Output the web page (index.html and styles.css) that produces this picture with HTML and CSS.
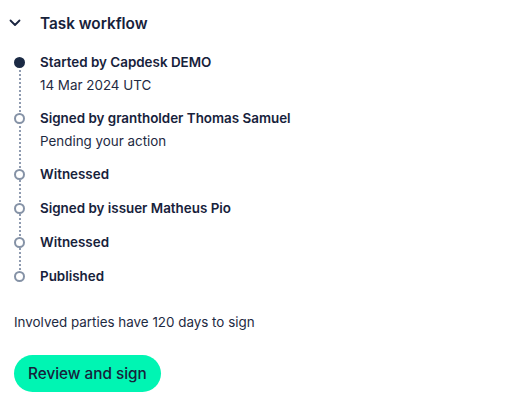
FILE: index.html
```html
<!DOCTYPE html>
<html>
<head>
<meta charset="utf-8">
<link rel="stylesheet" href="styles.css">
</head>
<body>
<div class="panel">
  <div class="header">
    <svg class="chev" width="12" height="8" viewBox="0 0 12 8"><path d="M1.5 1.5 L6 6 L10.5 1.5" fill="none" stroke="#1a2540" stroke-width="1.8" stroke-linecap="round" stroke-linejoin="round"/></svg>
    <span class="title">Task workflow</span>
  </div>
  <ul class="steps">
    <li class="step done">
      <div class="rail"><span class="dot"></span><span class="line"></span></div>
      <div class="body"><div class="label">Started by Capdesk DEMO</div><div class="sub">14 Mar 2024 UTC</div></div>
    </li>
    <li class="step">
      <div class="rail"><span class="dot"></span><span class="line"></span></div>
      <div class="body"><div class="label">Signed by grantholder Thomas Samuel</div><div class="sub">Pending your action</div></div>
    </li>
    <li class="step">
      <div class="rail"><span class="dot"></span><span class="line"></span></div>
      <div class="body"><div class="label">Witnessed</div></div>
    </li>
    <li class="step">
      <div class="rail"><span class="dot"></span><span class="line"></span></div>
      <div class="body"><div class="label">Signed by issuer Matheus Pio</div></div>
    </li>
    <li class="step">
      <div class="rail"><span class="dot"></span><span class="line"></span></div>
      <div class="body"><div class="label">Witnessed</div></div>
    </li>
    <li class="step last">
      <div class="rail"><span class="dot"></span></div>
      <div class="body"><div class="label">Published</div></div>
    </li>
  </ul>
  <p class="note">Involved parties have 120 days to sign</p>
  <button class="btn">Review and sign</button>
</div>
</body>
</html>
```

FILE: styles.css
```css
html, body {
  margin: 0;
  padding: 0;
  background: #ffffff;
}
body {
  font-family: Inter, "Noto Sans", sans-serif;
  color: #17223b;
}
.panel {
  padding: 12px 14px 0 14px;
}
.header {
  display: flex;
  align-items: center;
  height: 22px;
}
.chev {
  margin-left: -5px;
  width: 12px;
  height: 8px;
  margin-right: 19px;
}
.title {
  font-size: 15.3px;
  font-weight: 600;
}
.steps {
  list-style: none;
  margin: 17px 0 0 0;
  padding: 0;
}
.step {
  display: flex;
  padding-bottom: 11px;
}
.step.last {
  padding-bottom: 0;
}
.rail {
  width: 26px;
  position: relative;
  flex: none;
}
.dot {
  position: absolute;
  left: 0px;
  top: 6px;
  width: 11px;
  height: 11px;
  box-sizing: border-box;
  border-radius: 50%;
  border: 2px solid #8592a6;
  background: #fff;
  z-index: 1;
}
.done .dot {
  background: #1b2a44;
  border-color: #1b2a44;
}
.line {
  position: absolute;
  left: 4.5px;
  top: 14px;
  bottom: -20px;
  border-left: 2px dotted #8f9bb0;
}
.label {
  font-size: 13.4px;
  font-weight: 600;
  line-height: 23px;
  height: 23px;
}
.sub {
  font-size: 13.4px;
  font-weight: 400;
  line-height: 22px;
  height: 22px;
  color: #1e2a42;
}
.note {
  margin: 23px 0 0 0;
  font-size: 13.4px;
  line-height: 23px;
  color: #1e2a42;
}
.btn {
  margin-top: 21px;
  height: 37px;
  padding: 0 14px;
  border: none;
  border-radius: 19px;
  background: #00f5b3;
  color: #17223b;
  font-family: Inter, "Noto Sans", sans-serif;
  font-size: 15.3px;
  font-weight: 500;
  cursor: pointer;
}
```
